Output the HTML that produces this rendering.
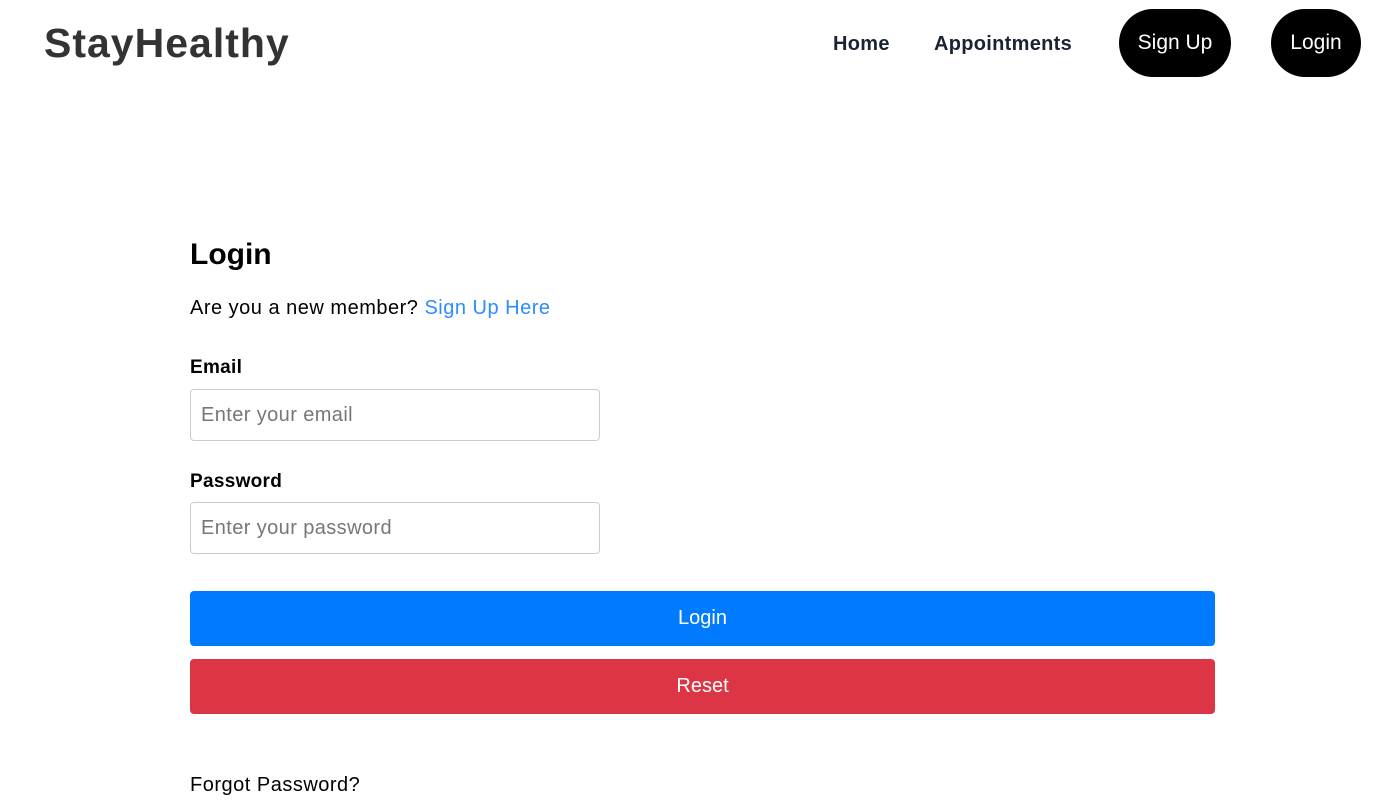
<!DOCTYPE html>
<html><head><style>
body{margin:0;width:1377px;height:807px;overflow:hidden;background:#fff;font-family:"Liberation Sans",sans-serif;color:#000;position:relative}
.logo{position:absolute;left:44px;top:20px;font-size:41px;font-weight:600;color:#333;letter-spacing:1px}
.nav{position:absolute;top:33px;font-size:20px;font-weight:700;color:#1a2233;letter-spacing:0.3px}
.pill{position:absolute;top:9px;height:68px;background:#000;color:#fff;border-radius:34px;font-size:21px;display:flex;align-items:center;justify-content:center}
h1{position:absolute;left:190px;top:238px;margin:0;font-size:30px;font-weight:700}
.t{position:absolute;left:190px;font-size:20px;letter-spacing:0.5px}
.lbl{position:absolute;left:190px;font-size:19px;font-weight:700;letter-spacing:0.3px}
.inp{position:absolute;left:190px;width:410px;height:52px;border:1px solid #ccc;border-radius:4px;font-size:20px;color:#777;box-sizing:border-box;padding-left:10px;line-height:50px;letter-spacing:0.4px}
.btn{position:absolute;left:190px;width:1025px;height:55px;border-radius:4px;color:#fff;font-size:20px;display:flex;align-items:center;justify-content:center}
</style></head><body>
<div class="logo">StayHealthy</div>
<div class="nav" style="left:833px">Home</div>
<div class="nav" style="left:934px">Appointments</div>
<div class="pill" style="left:1119px;width:112px">Sign Up</div>
<div class="pill" style="left:1271px;width:90px">Login</div>
<h1>Login</h1>
<div class="t" style="top:297px">Are you a new member? <span style="color:#2d8cff">Sign Up Here</span></div>
<div class="lbl" style="top:357px">Email</div>
<div class="inp" style="top:389px">Enter your email</div>
<div class="lbl" style="top:471px">Password</div>
<div class="inp" style="top:502px">Enter your password</div>
<div class="btn" style="top:591px;background:#007bff">Login</div>
<div class="btn" style="top:659px;background:#dc3545">Reset</div>
<div class="t" style="top:774px">Forgot Password?</div>
</body></html>
